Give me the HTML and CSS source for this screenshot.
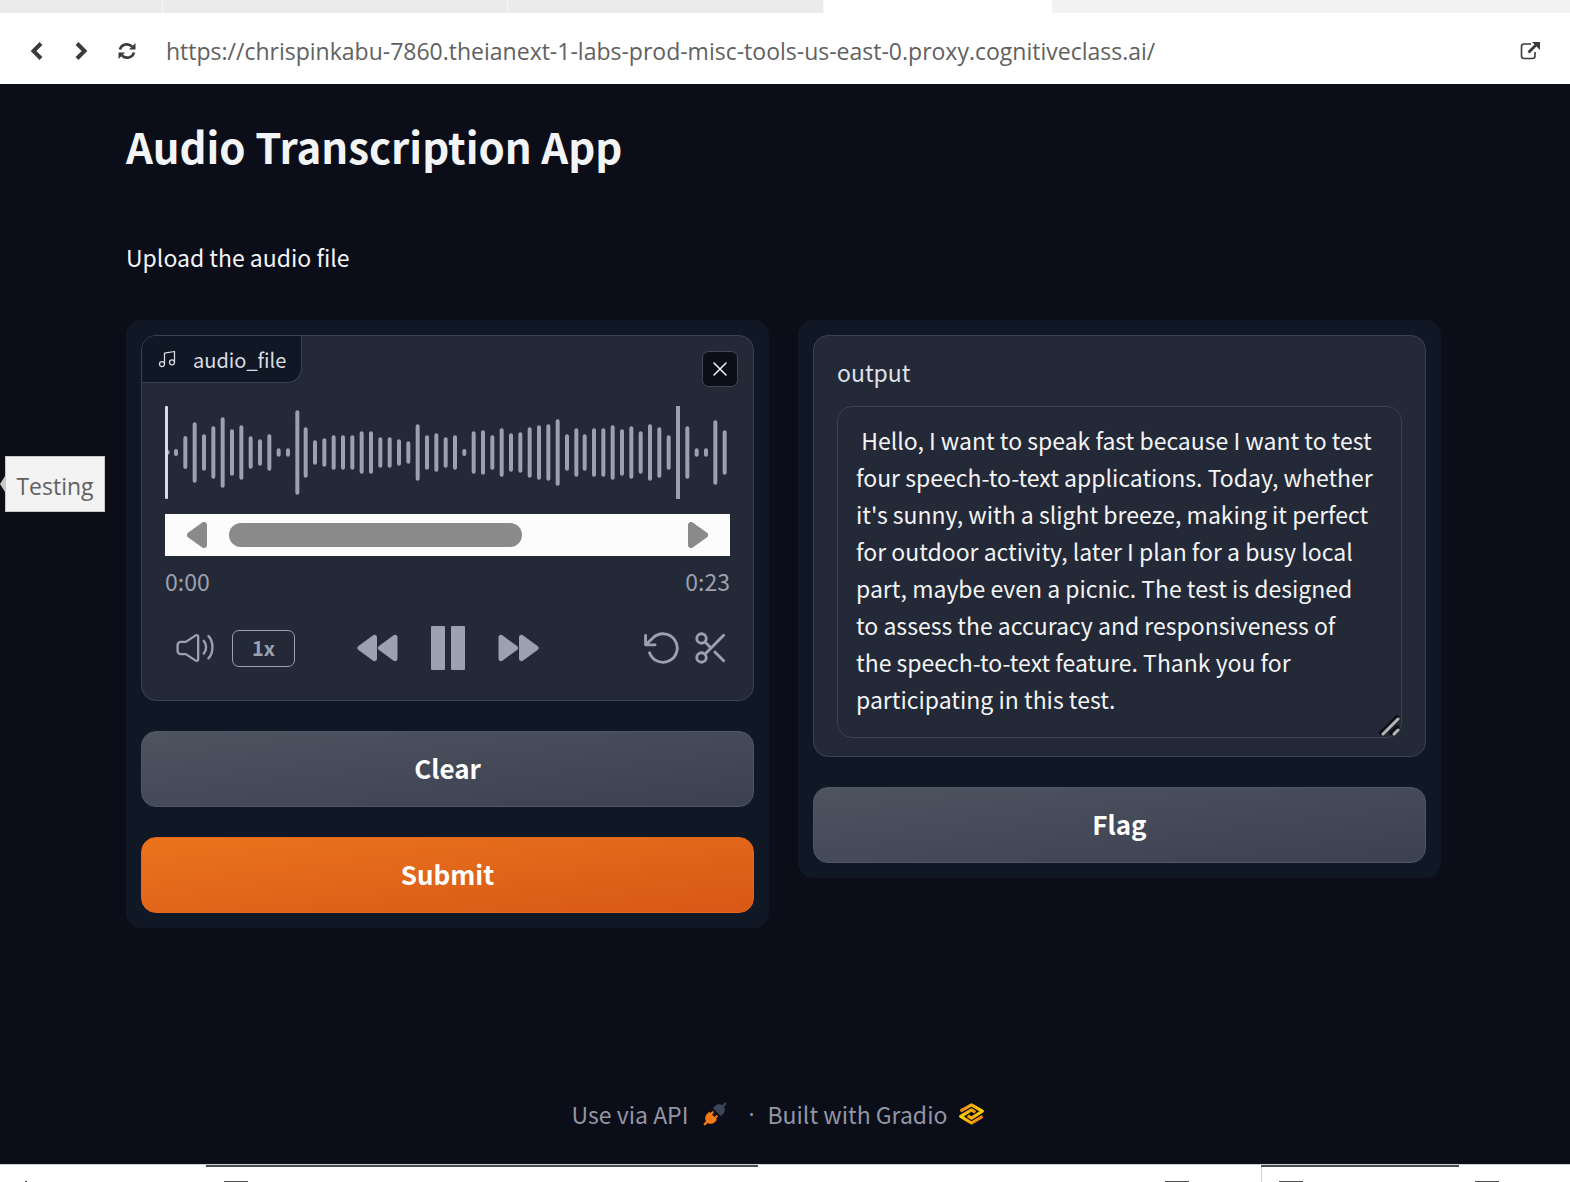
FILE: index.html
```html
<!DOCTYPE html>
<html lang="en">
<head>
<meta charset="utf-8">
<title>Audio Transcription App</title>
<link rel="stylesheet" href="styles.css">
</head>
<body>
<div class="tabs" aria-hidden="true">
  <span class="tab tab-first"></span>
  <span class="tab tab-wide"></span>
  <span class="tab tab-third"></span>
  <span class="tab tab-active"></span>
</div>
<nav class="toolbar" aria-label="Preview">
  <button class="tool" aria-label="Back"><svg width="14" height="20" viewBox="0 0 14 20"><path d="M11 2.500 3.500 10 11 17.500" fill="none" stroke="#3b3b3b" stroke-width="4"/></svg></button>
  <button class="tool" aria-label="Forward"><svg width="14" height="20" viewBox="0 0 14 20"><path d="M3 2.500 10.500 10 3 17.500" fill="none" stroke="#3b3b3b" stroke-width="4"/></svg></button>
  <button class="tool" aria-label="Reload"><svg width="18" height="18" viewBox="0 0 18 18"><path d="M2 7.500A7 6.500 0 0 1 14 4.500M16 10.500A7 6.500 0 0 1 4 13.500" fill="none" stroke="#3b3b3b" stroke-width="2.600"/><path d="M17.500 1v6.500H11zM.5 17v-6.500H7z" fill="#3b3b3b"/></svg></button>
  <input class="address" type="text" aria-label="Address" value="https://chrispinkabu-7860.theianext-1-labs-prod-misc-tools-us-east-0.proxy.cognitiveclass.ai/">
  <button class="tool" aria-label="Open in new window"><svg width="20" height="18" viewBox="0 0 20 18"><path d="M11 2H4Q1.500 2 1.500 4.500v9.500Q1.500 16.500 4 16.500h8.500Q15 16.500 15 14v-4" fill="none" stroke="#3b3b3b" stroke-width="1.600"/><path d="M8.500 10.500 16.500 2.500" stroke="#3b3b3b" stroke-width="2.800"/><path d="M12 0h8v8z" fill="#3b3b3b"/></svg></button>
</nav>

<div class="app">
  <div class="tip">Testing</div>
  <main class="content">
    <h1 class="title">Audio Transcription App</h1>
    <p class="lead">Upload the audio file</p>
    <div class="columns">
      <section class="panel">
        <div class="block audio">
          <div class="audio-head">
            <div class="audio-label">
              <svg width="20" height="20" viewBox="0 0 24 24" fill="none" stroke="currentColor" stroke-width="1.500" stroke-linecap="round" stroke-linejoin="round"><path d="M9 18V5l12-2v13"/><circle cx="6" cy="18" r="3"/><circle cx="18" cy="16" r="3"/></svg>
              <span>audio_file</span>
            </div>
            <button class="close" aria-label="Remove audio"><svg width="16" height="16" viewBox="0 0 16 16"><path d="M2 2 14 14M14 2 2 14" stroke="currentColor" stroke-width="1.500" stroke-linecap="round"/></svg></button>
          </div>
          <svg class="wave" viewBox="0 0 1695 279" preserveAspectRatio="none">
            <path fill="none" stroke="#9ca0b0" stroke-width="12" stroke-linecap="round" d="M8 138V140M33 135V144M61 96V183M89 55V224M117 91V188M145 67V212M173 40V239M201 76V203M229 64V215M257 97V182M285 106V173M313 91V188M341 133V146M369 133V146M397 19V260M422 70V209M450 109V170M478 103V176M506 94V185M534 94V185M562 94V185M590 82V197M618 82V197M646 100V179M674 100V179M702 106V173M730 112V167M758 61V218M786 94V185M814 88V191M842 100V179M870 94V185M898 135V144M926 82V197M954 79V200M982 94V185M1010 73V206M1038 88V191M1066 85V194M1094 70V209M1122 64V215M1150 61V218M1178 46V233M1206 91V188M1234 73V206M1259 91V188M1287 73V206M1315 73V206M1343 64V215M1371 76V203M1399 67V212M1427 82V197M1455 61V218M1483 70V209M1511 94V185M1539 0V279M1567 67V212M1595 133V146M1623 133V146M1651 49V230M1679 79V200"/>
            <rect width="9" height="279" rx="3" fill="#ddd6ec"/>
          </svg>
          <div class="scroller">
            <svg width="20" height="26" viewBox="0 0 20 26"><path d="M17 3v20L3 13z" fill="#8a8a8a" stroke="#8a8a8a" stroke-width="6" stroke-linejoin="round"/></svg>
            <div class="track"><div class="thumb"></div></div>
            <svg width="20" height="26" viewBox="0 0 20 26"><path d="M3 3v20L17 13z" fill="#8a8a8a" stroke="#8a8a8a" stroke-width="6" stroke-linejoin="round"/></svg>
          </div>
          <div class="times"><time>0:00</time><time>0:23</time></div>
          <div class="controls">
            <div class="group group-left">
              <button class="icon" aria-label="Volume"><svg width="38" height="38" viewBox="0 0 24 24" fill="none" stroke="currentColor" stroke-width="1.500" stroke-linecap="round"><path d="M1 13.857V10.143C1 9.038 1.895 8.143 3 8.143H5.900C6.096 8.143 6.287 8.085 6.450 7.978L12.450 4.022C13.114 3.584 14 4.061 14 4.857V19.143C14 19.939 13.114 20.416 12.450 19.978L6.450 16.022C6.287 15.915 6.096 15.857 5.900 15.857H3C1.895 15.857 1 14.962 1 13.857Z"/><path d="M17.500 7.500S19 9 19 11.500 17.500 15.500 17.500 15.500M20.500 4.500S23 7 23 11.500 20.500 18.500 20.500 18.500"/></svg></button>
              <button class="speed">1x</button>
            </div>
            <div class="group group-center">
              <button class="icon" aria-label="Skip backward"><svg width="41" height="28" viewBox="0 0 42 28"><path d="M18 3v22L3 14zM39 3v22L24 14z" fill="currentColor" stroke="currentColor" stroke-width="5" stroke-linejoin="round"/></svg></button>
              <button class="icon" aria-label="Pause"><svg width="34" height="44" viewBox="0 0 34 44"><path d="M1 1h12v42H1zM21 1h12v42H21z" fill="currentColor" stroke="currentColor" stroke-width="2" stroke-linejoin="round"/></svg></button>
              <button class="icon" aria-label="Skip forward"><svg width="41" height="28" viewBox="0 0 42 28"><path d="M3 3v22L18 14zM24 3v22L39 14z" fill="currentColor" stroke="currentColor" stroke-width="5" stroke-linejoin="round"/></svg></button>
            </div>
            <div class="group group-right">
              <button class="icon" aria-label="Undo"><svg width="38" height="38" viewBox="0 0 24 24" fill="none" stroke="currentColor" stroke-width="1.800" stroke-linecap="round" stroke-linejoin="round"><path d="M1 4v6h6M3.510 15a9 9 0 1 0 2.130-9.360L1 10"/></svg></button>
              <button class="icon" aria-label="Trim"><svg width="38" height="38" viewBox="0 0 24 24" fill="none" stroke="currentColor" stroke-width="1.800" stroke-linecap="round" stroke-linejoin="round"><circle cx="6" cy="6" r="3"/><circle cx="6" cy="18" r="3"/><path d="M20 4 8.120 15.880M14.470 14.480 20 20M8.120 8.120 12 12"/></svg></button>
            </div>
          </div>
        </div>
        <button class="btn">Clear</button>
        <button class="btn btn-primary">Submit</button>
      </section>
      <section class="panel">
        <div class="block output">
          <label class="output-label" for="output">output</label>
          <div class="field">
            <textarea id="output" class="text" rows="8"> Hello, I want to speak fast because I want to test four speech-to-text applications. Today, whether it's sunny, with a slight breeze, making it perfect for outdoor activity, later I plan for a busy local part, maybe even a picnic. The test is designed to assess the accuracy and responsiveness of the speech-to-text feature. Thank you for participating in this test.</textarea>
            <svg class="grip" width="21" height="21" viewBox="0 0 21 21" fill="none" stroke-linecap="round"><path d="M2 18 18 2M12 18 18 12" stroke="#0d0f16" stroke-width="4"/><path d="M4 19 19 4M15 19 19 15" stroke="#b4b4b4" stroke-width="3"/></svg>
          </div>
        </div>
        <button class="btn">Flag</button>
      </section>
    </div>
  </main>
  <footer class="footer">
    <a class="foot-link foot-api" href="#api">Use via API <svg width="24" height="24" viewBox="0 0 28 28"><path d="M26.942 2.943C27.463 2.422 27.463 1.578 26.942 1.057C26.422 .536 25.578 .536 25.057 1.057L22.571 3.543C21.121 2.593 19.537 2.434 18.175 2.640C16.550 2.886 15.113 3.668 14.390 4.390L12.390 6.390C12.140 6.641 12 6.980 12 7.333C12 7.687 12.140 8.026 12.390 8.276L19.724 15.610C20.245 16.130 21.089 16.130 21.610 15.610L23.610 13.610C24.332 12.887 25.114 11.450 25.360 9.825C25.566 8.463 25.407 6.878 24.457 5.428Z" fill="#3c4555"/><path d="M12.276 12.943C12.797 12.422 12.797 11.578 12.276 11.057C11.755 10.536 10.911 10.536 10.390 11.057L8.667 12.781L8.276 12.390C7.755 11.870 6.911 11.870 6.390 12.390L4.390 14.390C3.668 15.113 2.886 16.550 2.640 18.175C2.434 19.537 2.593 21.121 3.543 22.571L1.057 25.057C.536 25.578 .536 26.422 1.057 26.942C1.578 27.463 2.422 27.463 2.943 26.942L5.428 24.457C6.878 25.407 8.463 25.566 9.825 25.360C11.450 25.114 12.887 24.332 13.610 23.610L15.610 21.610C16.130 21.089 16.130 20.245 15.610 19.724L15.219 19.333L16.943 17.609C17.463 17.089 17.463 16.244 16.943 15.724C16.422 15.203 15.578 15.203 15.057 15.724L13.333 17.448L10.552 14.667Z" fill="#f97b16"/></svg></a>
    <span class="foot-dot">·</span>
    <a class="foot-link" href="#gradio">Built with Gradio <svg width="25" height="22" viewBox="0 0 72 62" fill="none" stroke-width="9" stroke-linejoin="round"><defs><linearGradient id="warm" x1="0" y1="0" x2="1" y2="0"><stop offset="0" stop-color="#f08a10"/><stop offset="1" stop-color="#f9d100"/></linearGradient><linearGradient id="gold" x1="0" y1="0" x2="1" y2="0"><stop offset="0" stop-color="#f9d100"/><stop offset="1" stop-color="#f0790f"/></linearGradient></defs><path d="M4 23 36 5 67 23 36 43 25 36" stroke="url(#warm)"/><path d="M68 38 36 57 5 38 36 19 47 26" stroke="url(#gold)"/></svg></a>
  </footer>
</div>

<div class="dock" aria-hidden="true">
  <div class="dock-bars"><span class="dock-bar"></span><span class="dock-bar"></span></div>
  <div class="dock-marks">
    <span class="mark mark-dot"></span>
    <span class="mark"></span>
    <span class="mark mark-push"></span>
    <span class="dock-line"></span>
    <span class="mark"></span>
    <span class="mark mark-last"></span>
  </div>
</div>
</body>
</html>
```
FILE: styles.css
```css
* { box-sizing: border-box; }

body {
  margin: 0;
  min-height: 100vh;
  display: flex;
  flex-direction: column;
  background: #0b0d18;
  color: #f3f4f6;
  font-family: "Noto Sans CJK SC", "Noto Sans", sans-serif;
  font-size: 23px;
}

button, input, textarea { font: inherit; color: inherit; }
button { padding: 0; border: 0; background: none; cursor: pointer; }
svg { display: block; flex: none; }

/* Editor tab strip */
.tabs { display: flex; height: 13px; background: #f2f2f2; }
.tab { background: #ebebeb; border-right: 1px solid #f7f7f7; }
.tab-first { width: 163px; }
.tab-wide { width: 345px; }
.tab-third { width: 316px; }
.tab-active { width: 228px; background: #fff; border-right-color: #fff; }

/* Preview toolbar */
.toolbar {
  display: flex;
  align-items: center;
  gap: 30px;
  height: 71px;
  padding: 4px 30px 0 30px;
  background: #fff;
}
.address {
  flex: 1;
  min-width: 0;
  border: 0;
  padding: 0;
  background: none;
  color: #616161;
  font-family: "Open Sans", sans-serif;
  line-height: 32px;
  outline: 0;
}

/* App */
.app {
  position: relative;
  flex: 1;
  display: flex;
  flex-direction: column;
}
.tip {
  position: absolute;
  left: 5px;
  top: 372px;
  width: 100px;
  height: 56px;
  border: 1px solid #c8c8c8;
  background: #f3f3f3;
  color: #616161;
  font-family: "Open Sans", sans-serif;
  line-height: 58px;
  text-align: center;
}
.tip::before {
  content: "";
  position: absolute;
  left: -6px;
  top: 19px;
  border: solid transparent;
  border-width: 8px 5px 8px 0;
  border-right-color: #c8c8c8;
}
.content { flex: 1; padding: 30px 129px 0 126px; }
.title { margin: 0; font-size: 42px; line-height: 64px; font-weight: 600; }
.lead { margin: 60px 0 44px; line-height: 38px; }

.columns {
  display: grid;
  grid-template-columns: 1fr 1fr;
  align-items: start;
  gap: 29px;
}
.panel {
  display: flex;
  flex-direction: column;
  gap: 30px;
  padding: 15px;
  border-radius: 15px;
  background: #111825;
}
.block {
  overflow: hidden;
  border: 1px solid #3a4252;
  border-radius: 15px;
  background: #232936;
}

/* Audio player */
.audio { padding-bottom: 30px; color: #9ca0b0; }
.audio-head { display: flex; justify-content: space-between; height: 70px; }
.audio-label {
  display: flex;
  align-items: center;
  gap: 16px;
  height: 47px;
  padding: 0 15px;
  border: solid #3a4252;
  border-width: 0 1px 1px 0;
  border-bottom-right-radius: 15px;
  background: #111825;
  color: #d9dce2;
  font-size: 20px;
}
.close {
  display: grid;
  place-items: center;
  width: 36px;
  height: 36px;
  margin: 15px;
  border: 1px solid #3f4756;
  border-radius: 7px;
  background: #0b0d18;
  color: #f3f4f6;
}
.wave { width: calc(100% - 46px); height: 93px; margin: 0 23px; }
.scroller {
  display: flex;
  align-items: center;
  gap: 22px;
  height: 42px;
  margin: 15px 23px 0;
  padding: 0 22px;
  background: #fcfcfc;
}
.track { flex: 1; }
.thumb { width: 67%; height: 24px; border-radius: 12px; background: #8a8a8a; }
.times {
  display: flex;
  justify-content: space-between;
  margin: 7px 23px 0;
  line-height: 36px;
}
.controls {
  display: grid;
  grid-template-columns: 1fr auto 1fr;
  align-items: center;
  margin: 27px 23px 0;
}
.group { display: flex; align-items: center; }
.group-left { gap: 18px; padding-left: 11px; }
.group-center { gap: 33px; }
.group-right { gap: 10px; justify-content: flex-end; }
.icon { display: block; }
.speed {
  width: 63px;
  height: 37px;
  border: 1px solid #9ca0b0;
  border-radius: 7px;
  font-size: 20px;
  line-height: 34px;
  font-weight: 700;
}

/* Output */
.output { padding: 18px 23px; }
.output-label { display: block; line-height: 36px; margin-bottom: 16px; color: #dfe2e8; }
.field { position: relative; }
.text {
  display: block;
  width: 100%;
  height: 332px;
  padding: 15px 27px 15px 18px;
  border: 1px solid #3a4252;
  border-radius: 15px;
  background: #232936;
  line-height: 37px;
  outline: 0;
  overflow: hidden;
  resize: none;
}
.grip { position: absolute; right: 2px; bottom: 2px; }

/* Buttons */
.btn {
  height: 76px;
  padding-bottom: 4px;
  border: 1px solid #4f5665;
  border-radius: 15px;
  background: linear-gradient(to bottom right, #4d535f, #3b4151);
  color: #fff;
  font-size: 26px;
  font-weight: 600;
}
.btn-primary {
  border-color: #e5671a;
  background: linear-gradient(to bottom right, #ea741d, #d85716);
}

/* Footer */
.footer {
  display: flex;
  justify-content: center;
  align-items: center;
  gap: 13px;
  padding: 0 14px 32px 0;
  line-height: 36px;
  color: #9296a3;
}
.foot-link { display: flex; align-items: center; gap: 12px; color: inherit; text-decoration: none; }
.foot-api { gap: 15px; margin-right: 8px; }
.foot-dot { font-family: "Open Sans", sans-serif; }

/* Bottom dock edge */
.dock {
  display: flex;
  flex-direction: column;
  height: 18px;
  border-top: 1px solid #cfcfd4;
  background: #fff;
}
.dock-bars {
  display: grid;
  grid-template-columns: 552fr 198fr;
  column-gap: 503px;
  padding: 0 111px 0 206px;
}
.dock-bar { height: 2px; background: #4c4c4c; }
.dock-marks { flex: 1; display: flex; align-items: flex-end; padding: 0 71px 0 25px; }
.mark { width: 24px; height: 1px; background: #4c4c4c; }
.mark-dot { width: 2px; margin-right: 197px; }
.mark-push { margin-left: auto; margin-right: 72px; }
.dock-line { align-self: stretch; width: 1px; margin-right: 17px; background: #cfcfcf; }
.mark-last { margin-left: 172px; }
```
